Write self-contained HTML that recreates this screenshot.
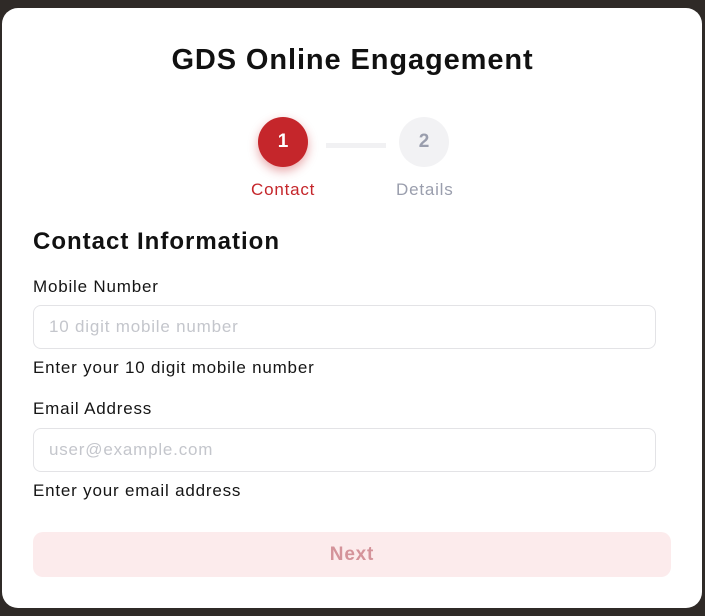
<!DOCTYPE html>
<html><head><style>
*{margin:0;padding:0;box-sizing:border-box}
body{width:705px;height:616px;overflow:hidden;background:#2f2a27;font-family:"Liberation Sans",sans-serif;position:relative;letter-spacing:0.8px}
.card{position:absolute;left:2px;top:8px;width:700px;height:600px;background:#fff;border-radius:16px}
.abs{position:absolute;white-space:nowrap}
h1{position:absolute;left:0;width:705px;top:44px;text-align:center;font-size:29px;font-weight:bold;color:#111;letter-spacing:0.9px}
.c{position:absolute;width:50px;height:50px;border-radius:50%;text-align:center;line-height:50px;font-size:19px;font-weight:bold;letter-spacing:0}
.inp{position:absolute;left:33px;width:623px;height:44px;border:1px solid #e3e3e6;border-radius:8px;padding-left:15px;line-height:42px;font-size:17px;color:#c4c6cc}
.lbl{font-size:17px;color:#151515}
</style></head><body>
<div class="card"></div>
<h1>GDS Online Engagement</h1>
<div class="c" style="left:258px;top:117px;background:#c5262b;color:#fff;box-shadow:0 4px 10px rgba(197,38,43,0.4)">1</div>
<div class="abs" style="left:326px;top:143px;width:60px;height:5px;background:#f1f1f3"></div>
<div class="c" style="left:399px;top:117px;background:#f2f2f4;color:#9a9ead">2</div>
<div class="abs" style="left:251px;top:180px;font-size:17px;color:#c5262b">Contact</div>
<div class="abs" style="left:396px;top:180px;font-size:17px;color:#9a9ead">Details</div>
<div class="abs" style="left:33px;top:228px;font-size:24px;font-weight:bold;color:#111;letter-spacing:1px">Contact Information</div>
<div class="abs lbl" style="left:33px;top:277px">Mobile Number</div>
<div class="inp" style="top:305px">10 digit mobile number</div>
<div class="abs lbl" style="left:33px;top:358px">Enter your 10 digit mobile number</div>
<div class="abs lbl" style="left:33px;top:399px">Email Address</div>
<div class="inp" style="top:428px">user@example.com</div>
<div class="abs lbl" style="left:33px;top:481px">Enter your email address</div>
<div class="abs" style="left:33px;top:532px;width:638px;height:45px;background:#fcebec;border-radius:10px;text-align:center;line-height:45px;font-size:19px;font-weight:bold;color:#d4939a">Next</div>
</body></html>
